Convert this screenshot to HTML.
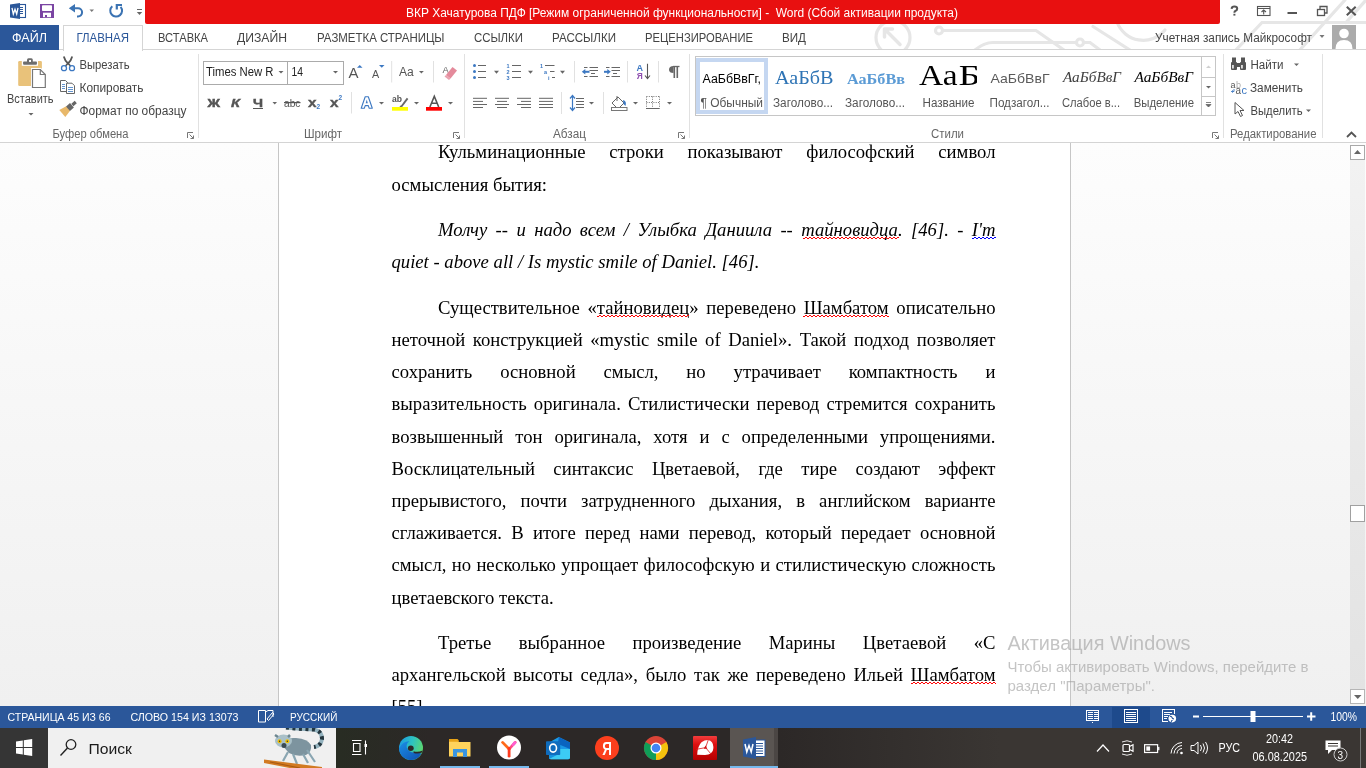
<!DOCTYPE html><html><head><meta charset="utf-8"><style>
*{margin:0;padding:0}
html,body{width:1366px;height:768px;overflow:hidden;background:#fff}
body{position:relative;font-family:'Liberation Sans',sans-serif}
.gl{will-change:transform}
.ln{position:absolute;white-space:nowrap;font-family:'Liberation Serif',serif;font-size:18.67px;line-height:32px;height:32px;color:#000}
.ln.j{text-align:justify;text-align-last:justify;white-space:normal}
.ln.it{font-style:italic}
u{text-decoration:none}

</style></head><body><div style="position:absolute;left:0;top:49px;width:1366px;height:1px;background:#d5d5d5"></div><div style="position:absolute;left:0;top:25px;width:59px;height:25px;background:#2b579a"></div><div style="position:absolute;left:63px;top:25px;width:78px;height:25px;background:#fff;border:1px solid #d5d5d5;border-bottom:none"></div><div style="position:absolute;left:0;top:142px;width:1366px;height:1px;background:#d4d4d4"></div><div style="position:absolute;left:203px;top:61px;width:84px;height:22px;border:1px solid #ababab;background:#fff"></div><div style="position:absolute;left:287px;top:61px;width:55px;height:22px;border:1px solid #ababab;background:#fff"></div><div style="position:absolute;left:695px;top:56px;width:519px;height:58px;border:1px solid #c6c6c6;background:#fff"></div><div style="position:absolute;left:696px;top:58px;width:64px;height:48px;border:4px solid #c5d7f1"></div><div style="position:absolute;left:0;top:143px;width:1366px;height:563px;background:linear-gradient(#fdfdfd,#f0f0f0)"></div><div style="position:absolute;left:278px;top:143px;width:791px;height:563px;background:#fff;border-left:1px solid #c6c6c6;border-right:1px solid #c6c6c6"></div><div style="position:absolute;left:1350px;top:160px;width:15px;height:529px;background:linear-gradient(#f2f2f2,#e8e8e8 60%,#e3e3e3)"></div><div style="position:absolute;left:1350px;top:145px;width:13px;height:13px;border:1px solid #a9a9a9;background:#fff"></div><div style="position:absolute;left:1350px;top:689px;width:13px;height:13px;border:1px solid #b5b5b5;background:#fff"></div><div style="position:absolute;left:1350px;top:505px;width:13px;height:15px;border:1px solid #a0a0a0;background:#fff"></div><div class="gl" style="position:absolute;left:279px;top:143px;width:790px;height:563px;overflow:hidden"><div class="ln j" style="top:-7.00px;left:159.00px;width:557.50px;">Кульминационные строки показывают философский символ</div><div class="ln" style="top:26.00px;left:112.50px;width:604.00px;">осмысления бытия:</div><div class="ln j it" style="top:71.00px;left:159.00px;width:557.50px;">Молчу -- и надо всем / Улыбка Даниила -- <u class="r">тайновидца</u>. [46]. - <u class="b">I'm</u></div><div class="ln it" style="top:103.00px;left:112.50px;width:604.00px;">quiet - above all / Is mystic smile of Daniel. [46].</div><div class="ln j" style="top:149.00px;left:159.00px;width:557.50px;">Существительное «<u class="r">тайновидец</u>» переведено <u class="r">Шамбатом</u> описательно</div><div class="ln j" style="top:181.00px;left:112.50px;width:604.00px;">неточной конструкцией «mystic smile of Daniel». Такой подход позволяет</div><div class="ln j" style="top:213.00px;left:112.50px;width:604.00px;">сохранить основной смысл, но утрачивает компактность и</div><div class="ln j" style="top:245.00px;left:112.50px;width:604.00px;">выразительность оригинала. Стилистически перевод стремится сохранить</div><div class="ln j" style="top:278.00px;left:112.50px;width:604.00px;">возвышенный тон оригинала, хотя и с определенными упрощениями.</div><div class="ln j" style="top:310.00px;left:112.50px;width:604.00px;">Восклицательный синтаксис Цветаевой, где тире создают эффект</div><div class="ln j" style="top:342.00px;left:112.50px;width:604.00px;">прерывистого, почти затрудненного дыхания, в английском варианте</div><div class="ln j" style="top:374.00px;left:112.50px;width:604.00px;">сглаживается. В итоге перед нами перевод, который передает основной</div><div class="ln j" style="top:406.00px;left:112.50px;width:604.00px;">смысл, но несколько упрощает философскую и стилистическую сложность</div><div class="ln" style="top:439.00px;left:112.50px;width:604.00px;">цветаевского текста.</div><div class="ln j" style="top:484.00px;left:159.00px;width:557.50px;">Третье выбранное произведение Марины Цветаевой «С</div><div class="ln j" style="top:516.00px;left:112.50px;width:604.00px;">архангельской высоты седла», было так же переведено Ильей <u class="r">Шамбатом</u></div><div class="ln" style="top:548.00px;left:112.50px;width:604.00px;">[55].</div></div><div style="position:absolute;left:0;top:706px;width:1366px;height:22px;background:#2b579a"></div><div style="position:absolute;left:1112px;top:707px;width:38px;height:21px;background:#1e4a8c"></div><div style="position:absolute;left:0;top:728px;width:1366px;height:40px;background:linear-gradient(90deg,#2b2b27 0px,#282c23 340px,#2c2827 430px,#2c2827 780px,#3a3633 1000px,#3a3633 1366px)"></div><div style="position:absolute;left:0;top:728px;width:48px;height:40px;background:#353535"></div><div style="position:absolute;left:48px;top:728px;width:288px;height:40px;background:#f0f0f0"></div><div style="position:absolute;left:730px;top:728px;width:44px;height:40px;background:#5a5552"></div><div style="position:absolute;left:774px;top:728px;width:4px;height:40px;background:#4b4644"></div><div style="position:absolute;left:440px;top:766px;width:40px;height:2px;background:#76b9ed"></div><div style="position:absolute;left:489px;top:766px;width:40px;height:2px;background:#76b9ed"></div><div style="position:absolute;left:730px;top:766px;width:48px;height:2px;background:#76b9ed"></div><svg class="gl" style="position:absolute;left:0;top:0" width="1366" height="768" viewBox="0 0 1366 768"><defs><clipPath id="clt"><rect x="0" y="0" width="1366" height="49"/></clipPath></defs><g clip-path="url(#clt)" stroke="#e6e6e6" stroke-width="3.2" fill="none" stroke-linecap="round"><circle cx="893" cy="37.6" r="17"/><path d="M885 29.5 L900 44.5 M884.5 29 V37 M884.5 29 H892.5" stroke-width="3.5"/><circle cx="939" cy="30.5" r="3.5"/><path d="M942.5 30.5 H1036 L1064 50"/><path d="M975 50 Q984 42.5 993 42.5 H1076.5"/><circle cx="1080" cy="42.5" r="3.5"/><path d="M1083.5 42.5 H1090 L1100 50"/><path d="M1093 26.5 L1130 50"/><path d="M1117 22 A28 28 0 0 0 1165 30"/><path d="M1234 52 L1262 22.5 H1366"/><path d="M1298 52 L1345 0"/><path d="M1346 22.5 L1366 0"/></g><path d="M145 0 H1220 V22 Q1220 24 1218 24 H147 Q145 24 145 22 Z" fill="#e81010"/><text x="406" y="17" font-family="'Liberation Sans', sans-serif" font-size="12" fill="#fff" font-weight="normal" text-anchor="start" textLength="552" lengthAdjust="spacingAndGlyphs" style="white-space:pre;">ВКР Хачатурова ПДФ [Режим ограниченной функциональности] -  Word (Сбой активации продукта)</text><g><rect x="19.5" y="4.5" width="6" height="13" fill="#fff" stroke="#2b579a" stroke-width="1.1"/><path d="M19 7.5h4M19 9.5h4M19 11.5h4M19 13.5h4" stroke="#2b579a" stroke-width="1"/><path d="M10 4.5 L20 3 L20 19 L10 17.5 Z" fill="#2b579a"/><path d="M12 7.8 L13.3 14 L15 9.2 L16.7 14 L18 7.8" stroke="#fff" stroke-width="1.3" fill="none"/><rect x="40" y="4" width="14" height="14" fill="#7b45a3"/><rect x="42" y="5.2" width="10" height="5.8" rx="0.8" fill="#fff"/><rect x="43" y="12.7" width="8" height="4.5" fill="#fff"/><rect x="45" y="15" width="2" height="2.2" fill="#7b45a3"/><path d="M68.8 8.2 L75 4 L75 12.4 Z" fill="#3b73b3"/><path d="M74 8.2 H78 A4.1 4.1 0 0 1 78 16.4 H77" stroke="#3b73b3" stroke-width="2" fill="none"/><path d="M89.5 9.5h4.5l-2.25 2.5z" fill="#777"/><path d="M112.3 6.2 A5.9 5.9 0 1 0 120.6 6.8" stroke="#3b73b3" stroke-width="2" fill="none"/><path d="M116.8 9.5 V5 H122" stroke="#3b73b3" stroke-width="2.2" fill="none"/><path d="M137 9.5h5" stroke="#666" stroke-width="1"/><path d="M136.8 12h5.4l-2.7 3z" fill="#666"/></g><g stroke="#555" fill="none"><path d="M1287.5 13h9.5" stroke-width="2"/><rect x="1317.5" y="9.5" width="7" height="6" stroke-width="1.3"/><path d="M1320 9.5 V6.5 H1327 V13 H1324.5" stroke-width="1.3"/><path d="M1346.8 6.8 L1355.7 15.2 M1355.7 6.8 L1346.8 15.2" stroke-width="2.1"/><rect x="1257.5" y="6.5" width="12.5" height="9" stroke-width="1.1"/><path d="M1257.5 8.5h12.5" stroke-width="1"/><path d="M1263.7 14.5v-4.5 M1261.5 12 L1263.7 10 L1266 12" stroke-width="1.1"/></g><path d="M1231.6 8.8 Q1231.8 6.6 1234.4 6.6 Q1237.2 6.6 1237.2 8.8 Q1237.2 10.3 1235.3 11 Q1234.4 11.4 1234.4 12.8" stroke="#555" stroke-width="2" fill="none"/><rect x="1233.4" y="13.8" width="2" height="1.8" fill="#555"/><text x="1155" y="42" font-family="'Liberation Sans', sans-serif" font-size="12" fill="#444" font-weight="normal" text-anchor="start" textLength="157" lengthAdjust="spacingAndGlyphs" style="white-space:pre;">Учетная запись Майкрософт</text><path d="M1319.5 35h5l-2.5 3z" fill="#777"/><rect x="1332" y="25" width="24" height="24" fill="#ababab"/><circle cx="1344" cy="33.5" r="4.8" fill="#fff"/><path d="M1335.5 49 Q1335.5 40 1344 40 Q1352.5 40 1352.5 49 Z" fill="#fff"/><text x="12" y="42" font-family="'Liberation Sans', sans-serif" font-size="12" fill="#fff" font-weight="normal" text-anchor="start" textLength="35" lengthAdjust="spacingAndGlyphs" style="white-space:pre;">ФАЙЛ</text><text x="76.5" y="42" font-family="'Liberation Sans', sans-serif" font-size="12" fill="#2b579a" font-weight="normal" text-anchor="start" textLength="52.5" lengthAdjust="spacingAndGlyphs" style="white-space:pre;">ГЛАВНАЯ</text><text x="158" y="42" font-family="'Liberation Sans', sans-serif" font-size="12" fill="#444" font-weight="normal" text-anchor="start" textLength="50" lengthAdjust="spacingAndGlyphs" style="white-space:pre;">ВСТАВКА</text><text x="237" y="42" font-family="'Liberation Sans', sans-serif" font-size="12" fill="#444" font-weight="normal" text-anchor="start" textLength="50" lengthAdjust="spacingAndGlyphs" style="white-space:pre;">ДИЗАЙН</text><text x="317" y="42" font-family="'Liberation Sans', sans-serif" font-size="12" fill="#444" font-weight="normal" text-anchor="start" textLength="127.5" lengthAdjust="spacingAndGlyphs" style="white-space:pre;">РАЗМЕТКА СТРАНИЦЫ</text><text x="474" y="42" font-family="'Liberation Sans', sans-serif" font-size="12" fill="#444" font-weight="normal" text-anchor="start" textLength="49" lengthAdjust="spacingAndGlyphs" style="white-space:pre;">ССЫЛКИ</text><text x="552" y="42" font-family="'Liberation Sans', sans-serif" font-size="12" fill="#444" font-weight="normal" text-anchor="start" textLength="64" lengthAdjust="spacingAndGlyphs" style="white-space:pre;">РАССЫЛКИ</text><text x="645" y="42" font-family="'Liberation Sans', sans-serif" font-size="12" fill="#444" font-weight="normal" text-anchor="start" textLength="108" lengthAdjust="spacingAndGlyphs" style="white-space:pre;">РЕЦЕНЗИРОВАНИЕ</text><text x="782" y="42" font-family="'Liberation Sans', sans-serif" font-size="12" fill="#444" font-weight="normal" text-anchor="start" textLength="24" lengthAdjust="spacingAndGlyphs" style="white-space:pre;">ВИД</text><path d="M198.5 54 V138" stroke="#e1e1e1" stroke-width="1"/><path d="M464.5 54 V138" stroke="#e1e1e1" stroke-width="1"/><path d="M689.5 54 V138" stroke="#e1e1e1" stroke-width="1"/><path d="M1223.5 54 V138" stroke="#e1e1e1" stroke-width="1"/><path d="M1322.5 54 V138" stroke="#e1e1e1" stroke-width="1"/><text x="52.5" y="137.5" font-family="'Liberation Sans', sans-serif" font-size="12" fill="#666" font-weight="normal" text-anchor="start" textLength="76" lengthAdjust="spacingAndGlyphs" style="white-space:pre;">Буфер обмена</text><text x="304" y="137.5" font-family="'Liberation Sans', sans-serif" font-size="12" fill="#666" font-weight="normal" text-anchor="start" textLength="38" lengthAdjust="spacingAndGlyphs" style="white-space:pre;">Шрифт</text><text x="553" y="137.5" font-family="'Liberation Sans', sans-serif" font-size="12" fill="#666" font-weight="normal" text-anchor="start" textLength="33" lengthAdjust="spacingAndGlyphs" style="white-space:pre;">Абзац</text><text x="931" y="137.5" font-family="'Liberation Sans', sans-serif" font-size="12" fill="#666" font-weight="normal" text-anchor="start" textLength="33" lengthAdjust="spacingAndGlyphs" style="white-space:pre;">Стили</text><text x="1230" y="137.5" font-family="'Liberation Sans', sans-serif" font-size="12" fill="#666" font-weight="normal" text-anchor="start" textLength="86.5" lengthAdjust="spacingAndGlyphs" style="white-space:pre;">Редактирование</text><g stroke="#777" stroke-width="1" fill="none"><path d="M187.5 138 V132.5 H193"/><path d="M189.5 134.5 L193.5 138.5 M193.5 135.5 V138.5 H190.5"/></g><g stroke="#777" stroke-width="1" fill="none"><path d="M453.5 138 V132.5 H459"/><path d="M455.5 134.5 L459.5 138.5 M459.5 135.5 V138.5 H456.5"/></g><g stroke="#777" stroke-width="1" fill="none"><path d="M678.5 138 V132.5 H684"/><path d="M680.5 134.5 L684.5 138.5 M684.5 135.5 V138.5 H681.5"/></g><g stroke="#777" stroke-width="1" fill="none"><path d="M1212.5 138 V132.5 H1218"/><path d="M1214.5 134.5 L1218.5 138.5 M1218.5 135.5 V138.5 H1215.5"/></g><path d="M1347 137 L1351.5 132.5 L1356 137" stroke="#555" stroke-width="1.8" fill="none"/><g><rect x="18.2" y="61" width="23.7" height="25" rx="1.2" fill="#e9c27a"/><rect x="21.8" y="60.5" width="16.2" height="5.3" fill="#fff"/><rect x="23.1" y="61.4" width="13.8" height="3.4" rx="0.8" fill="#6d6d6d"/><rect x="27" y="58.3" width="5.8" height="4.5" rx="1.5" fill="#6d6d6d"/><rect x="29.1" y="60" width="1.9" height="2" fill="#fff"/><path d="M31 68 H41 L46.8 73.8 V89 H31 Z" fill="#fff"/><path d="M32.5 69.5 H40.3 L45.3 74.5 V87.5 H32.5 Z" fill="#fff" stroke="#777" stroke-width="1.2"/><path d="M40.3 69.5 V74.5 H45.3" fill="none" stroke="#777" stroke-width="1.2"/><path d="M28.5 113 h5 l-2.5 2.5z" fill="#666"/><path d="M63.8 56.5 Q65 61 68 63.5 Q71 61 72.2 56.5" stroke="#555" stroke-width="1.8" fill="none"/><path d="M68 63.2 L65.5 66 M68 63.2 L70.5 66" stroke="#555" stroke-width="1.6"/><circle cx="64" cy="68.2" r="2.5" fill="none" stroke="#3c78c2" stroke-width="1.3"/><circle cx="72" cy="68.2" r="2.5" fill="none" stroke="#3c78c2" stroke-width="1.3"/><path d="M60.5 80.5 H65.5 L67.5 82.5 V91.5 H60.5 Z" fill="#fff" stroke="#666" stroke-width="1"/><path d="M62 84.5h3M62 86.5h3M62 88.5h3" stroke="#3c78c2" stroke-width="0.8"/><path d="M66.5 83.2 H72 L74.5 85.7 V93.5 H66.5 Z" fill="#fff" stroke="#666" stroke-width="1"/><path d="M68 87.5h5M68 89.5h5M68 91.5h5" stroke="#3c78c2" stroke-width="0.8"/><path d="M65.29 117.07 L70.10 110.85 L66.20 106.29 L59.31 110.08 Z" fill="#e8b86a"/><path d="M69.95 110.98 L73.90 107.60 L70.00 103.04 L66.05 106.42 Z" fill="#666"/><path d="M73.45 106.15 L76.79 103.29 L74.71 100.85 L71.37 103.71 Z" fill="#666"/></g><text x="7" y="102.7" font-family="'Liberation Sans', sans-serif" font-size="12" fill="#444" font-weight="normal" text-anchor="start" textLength="46.5" lengthAdjust="spacingAndGlyphs" style="white-space:pre;">Вставить</text><text x="79.5" y="69" font-family="'Liberation Sans', sans-serif" font-size="12" fill="#444" font-weight="normal" text-anchor="start" textLength="50" lengthAdjust="spacingAndGlyphs" style="white-space:pre;">Вырезать</text><text x="79.5" y="91.7" font-family="'Liberation Sans', sans-serif" font-size="12" fill="#444" font-weight="normal" text-anchor="start" textLength="64" lengthAdjust="spacingAndGlyphs" style="white-space:pre;">Копировать</text><text x="79.5" y="115" font-family="'Liberation Sans', sans-serif" font-size="12" fill="#444" font-weight="normal" text-anchor="start" textLength="107" lengthAdjust="spacingAndGlyphs" style="white-space:pre;">Формат по образцу</text><text x="206" y="76.4" font-family="'Liberation Sans', sans-serif" font-size="12" fill="#222" font-weight="normal" text-anchor="start" textLength="67.5" lengthAdjust="spacingAndGlyphs" style="white-space:pre;">Times New R</text><text x="291.5" y="76.4" font-family="'Liberation Sans', sans-serif" font-size="12" fill="#222" font-weight="normal" text-anchor="start" textLength="11.5" lengthAdjust="spacingAndGlyphs" style="white-space:pre;">14</text><path d="M278.5 71h5l-2.5 2.5z" fill="#666"/><path d="M333 71h5l-2.5 2.5z" fill="#666"/><g fill="#555"><text x="207.5" y="107.2" font-family="Liberation Sans" font-weight="bold" font-size="11.3" stroke="#555" stroke-width="0.5" textLength="12.5" lengthAdjust="spacingAndGlyphs">Ж</text><text x="231" y="107.2" font-family="Liberation Sans" font-weight="bold" font-style="italic" font-size="11.3" stroke="#555" stroke-width="0.4" textLength="9" lengthAdjust="spacingAndGlyphs">К</text><text x="253" y="107.2" font-family="Liberation Sans" font-weight="bold" font-size="11.3" stroke="#555" stroke-width="0.5" textLength="10" lengthAdjust="spacingAndGlyphs">Ч</text><rect x="253" y="108" width="10" height="1"/><path d="M272.5 102h4.5l-2.25 2.5z" fill="#666"/><text x="284" y="107" font-family="Liberation Sans" font-size="11" textLength="16.5" lengthAdjust="spacingAndGlyphs">abc</text><rect x="284" y="102" width="16.5" height="1.2"/><text x="308" y="107.3" font-family="Liberation Sans" font-weight="bold" font-size="13" stroke="#555" stroke-width="0.4" textLength="8.5" lengthAdjust="spacingAndGlyphs">x</text><text x="316.5" y="108.8" font-family="Liberation Sans" font-weight="bold" font-size="6.5" fill="#3c78c2">2</text><text x="330" y="107.3" font-family="Liberation Sans" font-weight="bold" font-size="13" stroke="#555" stroke-width="0.4" textLength="8.5" lengthAdjust="spacingAndGlyphs">x</text><text x="338.5" y="100" font-family="Liberation Sans" font-weight="bold" font-size="6.5" fill="#3c78c2">2</text></g><g><text x="348.5" y="77.8" font-family="Liberation Sans" font-size="14" fill="#555" textLength="10" lengthAdjust="spacingAndGlyphs">A</text><path d="M357 67.8h5.5l-2.75-2.8z" fill="#3c78c2"/><text x="372" y="77.8" font-family="Liberation Sans" font-size="10.5" fill="#555" textLength="7.2" lengthAdjust="spacingAndGlyphs">A</text><path d="M379 65h5.5l-2.75 2.8z" fill="#3c78c2"/><path d="M391.7 61 V82.5 M433.5 61 V82.5 M351.5 92 V113.5" stroke="#e1e1e1" stroke-width="1"/><text x="399" y="75.7" font-family="Liberation Sans" font-size="12" fill="#555" textLength="14.8" lengthAdjust="spacingAndGlyphs">Aa</text><path d="M419 71h4.8l-2.4 2.5z" fill="#666"/><text x="442.5" y="73" font-family="Liberation Sans" font-size="9.5" fill="#666">A</text><path d="M446 75 L452.5 67 L457 70.5 L450.5 78.5 Z" fill="#e48a9b"/><path d="M444.5 76.5 L446 75 L450.5 78.5 L449 80 Z" fill="#e48a9b" opacity="0.8"/><path d="M361.2 108.3 L365.2 96.8 H368.3 L372.3 108.3 H369.2 L368.3 105.6 H365.2 L364.3 108.3 Z" fill="#fff" stroke="#3c78c2" stroke-width="1.1" stroke-linejoin="round"/><path d="M365.7 103.3 H367.8 L366.75 99.6 Z" fill="#3c78c2"/><path d="M379 102h5l-2.5 2.5z" fill="#666"/><text x="392" y="101.5" font-family="Liberation Sans" font-size="9.5" font-weight="bold" fill="#555" textLength="10" lengthAdjust="spacingAndGlyphs">ab</text><path d="M400.5 106.2 L406.8 97.8 L408.3 99 L402 107.2 Z" fill="#666"/><path d="M399.5 107 L400.5 105.5 L401.8 106.6 Z" fill="#444"/><rect x="392" y="107" width="16" height="3.7" fill="#ffff00"/><path d="M414 102h5l-2.5 2.5z" fill="#666"/><path d="M429.9 107 L434.3 96.3 L438.7 107 M431.6 103.2 H437" stroke="#555" stroke-width="1.6" fill="none"/><rect x="426" y="107" width="16" height="3.7" fill="#ff0000"/><path d="M448 102h5l-2.5 2.5z" fill="#666"/></g><g><circle cx="474.5" cy="65.5" r="1.5" fill="#3c78c2"/><path d="M478 65.5h8" stroke="#666" stroke-width="1"/><path d="M512 65.5h9" stroke="#666" stroke-width="1"/><circle cx="474.5" cy="71.5" r="1.5" fill="#3c78c2"/><path d="M478 71.5h8" stroke="#666" stroke-width="1"/><path d="M512 71.5h9" stroke="#666" stroke-width="1"/><circle cx="474.5" cy="77.5" r="1.5" fill="#3c78c2"/><path d="M478 77.5h8" stroke="#666" stroke-width="1"/><path d="M512 77.5h9" stroke="#666" stroke-width="1"/><text x="506.5" y="68" font-family="Liberation Sans" font-size="5.5" font-weight="bold" fill="#3c78c2">1</text><text x="506.5" y="74" font-family="Liberation Sans" font-size="5.5" font-weight="bold" fill="#3c78c2">2</text><text x="506.5" y="80" font-family="Liberation Sans" font-size="5.5" font-weight="bold" fill="#3c78c2">3</text><path d="M494 70.8h5l-2.5 3z M528 70.8h5l-2.5 3z M560 70.8h5l-2.5 3z" fill="#666"/><text x="540" y="68" font-family="Liberation Sans" font-size="5.5" font-weight="bold" fill="#3c78c2">1</text><path d="M545 65.5h9.5 M550 71.5h4.5 M552 77.5h3" stroke="#666" stroke-width="1"/><text x="544" y="74" font-family="Liberation Sans" font-size="5.5" font-weight="bold" fill="#3c78c2">a</text><text x="548" y="80" font-family="Liberation Sans" font-size="5.5" font-weight="bold" fill="#3c78c2">i</text><path d="M574.5 61 V82.5 M627.5 61 V82.5 M658.5 61 V82.5 M561.5 92 V114 M603.5 92 V114" stroke="#e1e1e1" stroke-width="1"/><path d="M473 98.3h14" stroke="#666" stroke-width="1"/><path d="M473 101.4h10" stroke="#666" stroke-width="1"/><path d="M473 104.5h14" stroke="#666" stroke-width="1"/><path d="M473 107.5h10" stroke="#666" stroke-width="1"/><path d="M495.0 98.3h14" stroke="#666" stroke-width="1"/><path d="M497.0 101.4h10" stroke="#666" stroke-width="1"/><path d="M495.0 104.5h14" stroke="#666" stroke-width="1"/><path d="M497.0 107.5h10" stroke="#666" stroke-width="1"/><path d="M517 98.3h14" stroke="#666" stroke-width="1"/><path d="M521 101.4h10" stroke="#666" stroke-width="1"/><path d="M517 104.5h14" stroke="#666" stroke-width="1"/><path d="M521 107.5h10" stroke="#666" stroke-width="1"/><path d="M539 98.3h14" stroke="#666" stroke-width="1"/><path d="M539 101.4h14" stroke="#666" stroke-width="1"/><path d="M539 104.5h14" stroke="#666" stroke-width="1"/><path d="M539 107.5h14" stroke="#666" stroke-width="1"/><path d="M572.5 96 V110 M570 98.5 L572.5 95.5 L575 98.5 M570 107.5 L572.5 110.5 L575 107.5" stroke="#3c78c2" stroke-width="1.2" fill="none"/><path d="M576 98.5h8 M576 101.5h8 M576 104.5h8 M576 107.5h8" stroke="#666" stroke-width="1"/><path d="M589 102h5l-2.5 2.5z" fill="#666"/><path d="M584 67.5h3.5 M589.5 67.5h8.5 M589.5 70.5h8.5 M591 73.5h4 M584 76.5h3.5 M589.5 76.5h8.5" stroke="#666" stroke-width="1"/><path d="M581.8 71.8 L585.3 69 V74.6 Z" fill="#3c78c2"/><path d="M584.5 71.8 H589.5" stroke="#3c78c2" stroke-width="2"/><path d="M606 67.5h3.5 M611.5 67.5h8.5 M611.5 70.5h8.5 M613 73.5h4 M606 76.5h3.5 M611.5 76.5h8.5" stroke="#666" stroke-width="1"/><path d="M610.8 71.8 L607.3 69 V74.6 Z" fill="#3c78c2"/><path d="M604 71.8 H608" stroke="#3c78c2" stroke-width="2"/><text x="636.5" y="70.6" font-family="Liberation Sans" font-size="9" font-weight="bold" fill="#3c78c2" textLength="6.5" lengthAdjust="spacingAndGlyphs">A</text><text x="636.7" y="78.8" font-family="Liberation Sans" font-size="9" font-weight="bold" fill="#8e4fb0" textLength="6" lengthAdjust="spacingAndGlyphs">Я</text><path d="M647.5 63.8 V78.5 M645 75.5 L647.5 78.6 L650 75.5" stroke="#555" stroke-width="1.1" fill="none"/><path d="M673 66.5 H679.5" stroke="#666" stroke-width="1.3"/><path d="M674.3 66 V78 M677.3 66 V78" stroke="#666" stroke-width="1.6"/><path d="M673.5 66 Q669 66 669 69.5 Q669 73 673.5 73 Z" fill="#666"/><path d="M612 103 L618 97 L624 103 L618 109 Z" fill="none" stroke="#666" stroke-width="1"/><path d="M617 96 V101" stroke="#666" stroke-width="1"/><path d="M623 100 Q627 101 625.5 106 L623.5 104 Z" fill="#3c78c2"/><rect x="611.5" y="107.5" width="15.5" height="3" fill="#fff" stroke="#777" stroke-width="1"/><path d="M633 102h5l-2.5 2.5z" fill="#666"/><g stroke="#777" stroke-width="1" stroke-dasharray="1 1.3" fill="none"><path d="M646.5 96.5h13 M646.5 102.5h13 M646.5 96.5v12 M652.5 96.5v12 M659.5 96.5v12"/></g><path d="M646 108.5h13.5" stroke="#666" stroke-width="1"/><path d="M667 102h5l-2.5 2.5z" fill="#666"/></g><path d="M1201.5 57 V115 M1201.5 77.5 H1215 M1201.5 96.5 H1215" stroke="#c6c6c6" stroke-width="1" fill="none"/><path d="M1206 68h5l-2.5-2.5z" fill="#cfcfcf"/><path d="M1206 86h5l-2.5 2.5z" fill="#666"/><path d="M1206 102.5h5 M1206 104.5h5l-2.5 2.5z" stroke="#666" stroke-width="0.8" fill="#666"/><text x="702.5" y="83" font-family="'Liberation Sans', sans-serif" font-size="12" fill="#000" font-weight="normal" text-anchor="start" textLength="58.5" lengthAdjust="spacingAndGlyphs" style="white-space:pre;">АаБбВвГг,</text><text x="700.5" y="106.5" font-family="'Liberation Sans', sans-serif" font-size="12" fill="#555" font-weight="normal" text-anchor="start" textLength="62.5" lengthAdjust="spacingAndGlyphs" style="white-space:pre;">¶ Обычный</text><text x="775" y="84.2" font-family="'Liberation Serif', serif" font-size="18.5" fill="#2e74b5" font-weight="normal" text-anchor="start" textLength="58.5" lengthAdjust="spacingAndGlyphs" style="white-space:pre;">АаБбВ</text><text x="773" y="106.5" font-family="'Liberation Sans', sans-serif" font-size="12" fill="#555" font-weight="normal" text-anchor="start" textLength="60" lengthAdjust="spacingAndGlyphs" style="white-space:pre;">Заголово...</text><text x="847" y="83.7" font-family="'Liberation Serif', serif" font-size="14.5" fill="#5b9bd5" font-weight="bold" text-anchor="start" textLength="58" lengthAdjust="spacingAndGlyphs" style="white-space:pre;">АаБбВв</text><text x="845" y="106.5" font-family="'Liberation Sans', sans-serif" font-size="12" fill="#555" font-weight="normal" text-anchor="start" textLength="60" lengthAdjust="spacingAndGlyphs" style="white-space:pre;">Заголово...</text><defs><clipPath id="cl1"><rect x="915" y="57" width="62" height="40"/></clipPath></defs><g clip-path="url(#cl1)"><text x="919" y="85" font-family="'Liberation Serif', serif" font-size="30" fill="#000" font-weight="normal" text-anchor="start" textLength="38.5" lengthAdjust="spacingAndGlyphs" style="white-space:pre;">Аа</text><text x="958.5" y="85" font-family="'Liberation Serif', serif" font-size="30" fill="#000" font-weight="normal" text-anchor="start" textLength="22" lengthAdjust="spacingAndGlyphs" style="white-space:pre;">Б</text></g><text x="922.5" y="106.5" font-family="'Liberation Sans', sans-serif" font-size="12" fill="#555" font-weight="normal" text-anchor="start" textLength="52" lengthAdjust="spacingAndGlyphs" style="white-space:pre;">Название</text><text x="990.5" y="83" font-family="'Liberation Sans', sans-serif" font-size="13" fill="#5a5a5a" font-weight="normal" text-anchor="start" textLength="59" lengthAdjust="spacingAndGlyphs" style="white-space:pre;">АаБбВвГ</text><text x="989.5" y="106.5" font-family="'Liberation Sans', sans-serif" font-size="12" fill="#555" font-weight="normal" text-anchor="start" textLength="60" lengthAdjust="spacingAndGlyphs" style="white-space:pre;">Подзагол...</text><text x="1063" y="81.6" font-family="'Liberation Serif', serif" font-size="14" fill="#404040" font-weight="normal" text-anchor="start" textLength="58" lengthAdjust="spacingAndGlyphs" style="white-space:pre;font-style:italic">АаБбВвГ</text><text x="1062" y="106.5" font-family="'Liberation Sans', sans-serif" font-size="12" fill="#555" font-weight="normal" text-anchor="start" textLength="58" lengthAdjust="spacingAndGlyphs" style="white-space:pre;">Слабое в...</text><text x="1134.5" y="81.6" font-family="'Liberation Serif', serif" font-size="14" fill="#000" font-weight="normal" text-anchor="start" textLength="58.5" lengthAdjust="spacingAndGlyphs" style="white-space:pre;font-style:italic">АаБбВвГ</text><text x="1133.7" y="106.5" font-family="'Liberation Sans', sans-serif" font-size="12" fill="#555" font-weight="normal" text-anchor="start" textLength="60.3" lengthAdjust="spacingAndGlyphs" style="white-space:pre;">Выделение</text><g fill="#555"><rect x="1231" y="62" width="6" height="8" rx="1"/><rect x="1240" y="62" width="6" height="8" rx="1"/><rect x="1236" y="63" width="5" height="4"/><rect x="1232" y="57.5" width="4" height="5"/><rect x="1241" y="57.5" width="4" height="5"/><rect x="1232.2" y="65" width="1.5" height="3.5" fill="#fff"/><rect x="1241.2" y="65" width="1.5" height="3.5" fill="#fff"/></g><text x="1250.5" y="68.6" font-family="'Liberation Sans', sans-serif" font-size="12" fill="#444" font-weight="normal" text-anchor="start" textLength="33" lengthAdjust="spacingAndGlyphs" style="white-space:pre;">Найти</text><path d="M1294 63.5h5l-2.5 2.5z" fill="#666"/><text x="1230.5" y="87.5" font-family="Liberation Sans" font-size="9" fill="#555">a</text><text x="1236" y="87.5" font-family="Liberation Sans" font-size="9" fill="#aaa">b</text><text x="1235.5" y="94" font-family="Liberation Sans" font-size="10" fill="#555" textLength="5.5" lengthAdjust="spacingAndGlyphs">a</text><text x="1241.5" y="94" font-family="Liberation Sans" font-size="10" fill="#3c78c2" textLength="5.5" lengthAdjust="spacingAndGlyphs">c</text><path d="M1234 89 V91.5 H1231.5 M1232.8 90.3 L1231.5 91.5 L1232.8 92.7" stroke="#3c78c2" stroke-width="0.9" fill="none"/><text x="1250" y="92" font-family="'Liberation Sans', sans-serif" font-size="12" fill="#444" font-weight="normal" text-anchor="start" textLength="53" lengthAdjust="spacingAndGlyphs" style="white-space:pre;">Заменить</text><path d="M1235 102.5 V114 L1238 111.5 L1240.5 116.5 L1242.5 115.5 L1240 110.5 L1244 110.5 Z" fill="#fff" stroke="#555" stroke-width="1"/><text x="1250.5" y="115" font-family="'Liberation Sans', sans-serif" font-size="12" fill="#444" font-weight="normal" text-anchor="start" textLength="52" lengthAdjust="spacingAndGlyphs" style="white-space:pre;">Выделить</text><path d="M1306 109.5h5l-2.5 2.5z" fill="#666"/><path d="M1354 153.9h7l-3.5-3.9z" fill="#666"/><path d="M1354 695h7.5l-3.75 4z" fill="#666"/><text x="7.5" y="721.4" font-family="'Liberation Sans', sans-serif" font-size="11" fill="#fff" font-weight="normal" text-anchor="start" textLength="103" lengthAdjust="spacingAndGlyphs" style="white-space:pre;">СТРАНИЦА 45 ИЗ 66</text><text x="130.5" y="721.4" font-family="'Liberation Sans', sans-serif" font-size="11" fill="#fff" font-weight="normal" text-anchor="start" textLength="108" lengthAdjust="spacingAndGlyphs" style="white-space:pre;">СЛОВО 154 ИЗ 13073</text><text x="290" y="721.4" font-family="'Liberation Sans', sans-serif" font-size="11" fill="#fff" font-weight="normal" text-anchor="start" textLength="47.5" lengthAdjust="spacingAndGlyphs" style="white-space:pre;">РУССКИЙ</text><g stroke="#fff" stroke-width="1" fill="none"><path d="M258.5 710.5 H265.5 V722 H258.5 Z M265.5 712 L268 710.5 H273 V717"/><path d="M267 719 L272.5 712.5 L274 714 L268.5 720.5 Z"/></g><g stroke="#fff" stroke-width="1" fill="none" shape-rendering="crispEdges"><rect x="1086.5" y="710.5" width="12" height="10"/><path d="M1088 712.5h3.5 M1088 714.5h3.5 M1088 716.5h3.5 M1088 718.5h3.5 M1094 712.5h3.5 M1094 714.5h3.5 M1094 716.5h3.5 M1094 718.5h3.5"/><path d="M1092.5 710 V723" stroke-dasharray="1 1"/><rect x="1124.5" y="709.5" width="13" height="13" stroke-width="1.2"/><path d="M1126 712.5h10 M1126 714.5h10 M1126 716.5h10 M1126 718.5h10 M1126 720.5h10"/><path d="M1168 721.5 H1162.5 V709.5 H1174.5 V714"/><path d="M1164 712.5h8 M1164 714.5h6 M1164 716.5h4 M1164 718.5h3"/></g><circle cx="1172.3" cy="718.6" r="4.6" fill="#2b579a"/><circle cx="1172.3" cy="718.6" r="3.8" fill="#fff"/><path d="M1170 716.5 Q1171.5 716 1172 717.5 Q1172.5 719 1174 718.8 M1171.5 721.8 Q1171.2 720.3 1172.6 720.5" stroke="#2b579a" stroke-width="1.1" fill="none"/><path d="M1193 716.5h6 M1307 716.5h8.5 M1311.2 712.3v8.5" stroke="#fff" stroke-width="2"/><path d="M1203 716.5h100" stroke="#fff" stroke-width="1"/><rect x="1250.5" y="711" width="5" height="11" fill="#fff"/><text x="1330.5" y="721.4" font-family="'Liberation Sans', sans-serif" font-size="12" fill="#fff" font-weight="normal" text-anchor="start" textLength="26.5" lengthAdjust="spacingAndGlyphs" style="white-space:pre;">100%</text><g fill="#fff"><path d="M16 741.5 L22.8 740.5 V747 H16 Z M23.8 740.3 L32.2 739 V747 H23.8 Z M16 748 H22.8 V754.5 L16 753.5 Z M23.8 748 H32.2 V756 L23.8 754.7 Z"/></g><circle cx="71" cy="744.5" r="4.8" fill="none" stroke="#222" stroke-width="1.3"/><path d="M67.5 748 L60.5 755.5" stroke="#222" stroke-width="1.4"/><text x="88.5" y="753.5" font-family="'Liberation Sans', sans-serif" font-size="15" fill="#1a1a1a" font-weight="normal" text-anchor="start" textLength="43.5" lengthAdjust="spacingAndGlyphs" style="white-space:pre;">Поиск</text><defs><clipPath id="clsb"><rect x="48" y="728" width="288" height="40"/></clipPath></defs><g clip-path="url(#clsb)"><path d="M286 727.5 Q300 729 314 729.5 Q322 731 322 739 Q321 746 314 747" stroke="#93b2be" stroke-width="4" fill="none"/><path d="M286 727.5 Q300 729 314 729.5 Q322 731 322 739 Q321 746 314 747" stroke="#24363e" stroke-width="4" stroke-dasharray="3 3.5" fill="none"/><path d="M281 744 Q284 737 296 738 Q308 739 311 745 Q312 752 306 755 Q296 757 289 753 Z" fill="#7d949f"/><path d="M288 752 L283 761 M293 754 L297 764 M303 754 L308 763 M307 750 L315 762" stroke="#8aa6b2" stroke-width="2.2" fill="none"/><ellipse cx="283.5" cy="741" rx="8.5" ry="6.5" fill="#a9c0c8"/><path d="M275 735 L278 737 M290 735 L288 737" stroke="#6d8791" stroke-width="2.5"/><circle cx="284" cy="745.5" r="2.5" fill="#3b4b52"/><circle cx="279.6" cy="741.2" r="2" fill="#f0c000"/><circle cx="287.3" cy="741.2" r="2" fill="#f0c000"/><circle cx="279.6" cy="741.2" r="0.7" fill="#333"/><circle cx="287.3" cy="741.2" r="0.7" fill="#333"/><path d="M264 759.5 L322 767 L322 770 L300 770 L264 763 Z" fill="#d27a22"/><path d="M270 762 L300 768" stroke="#a85a12" stroke-width="1.2"/></g><g stroke="#fff" stroke-width="1.1" fill="none"><path d="M352 740.5 H361.5 M352 754.5 H361.5 M353.5 743.5 V751.5 H360 V743.5 Z M365.5 740.5 V754.5"/></g><rect x="364.5" y="744" width="2.5" height="3" fill="#fff"/><defs><linearGradient id="edg" x1="0" y1="0.3" x2="1" y2="0.6"><stop offset="0" stop-color="#1b9de2"/><stop offset="0.5" stop-color="#2ec3c0"/><stop offset="1" stop-color="#5fd86a"/></linearGradient><linearGradient id="edg2" x1="0" y1="0" x2="1" y2="1"><stop offset="0" stop-color="#1b8fe6"/><stop offset="1" stop-color="#0f4fae"/></linearGradient></defs><circle cx="411" cy="748" r="12" fill="url(#edg)"/><path d="M399 748.5 A12 12 0 0 0 421.6 753.6 Q418 752.6 414.5 752.6 Q408.5 752.3 406.8 747.8 Q405.8 743.5 409.5 741.3 Q402.5 741.2 399 748.5 Z" fill="url(#edg2)"/><ellipse cx="410.8" cy="748.2" rx="2.9" ry="2.7" fill="#2c2827"/><path d="M413.6 751.3 Q418 752.6 422.6 750.6 L422 752.6 Q417.5 754.3 413.6 752.9 Z" fill="#2c2827"/><path d="M449 740.5 H457 L458.8 742 H470.5 V756.5 H449 Z" fill="#ffd35c"/><path d="M449 739 H457.5 L459 740.6 V741.8 H449 Z" fill="#e8a317"/><path d="M453 749 H467 V757 H463 V752.5 H457 V757 H453 Z" fill="#3a95e0"/><circle cx="509" cy="747.5" r="12" fill="#fff"/><path d="M502.6 742.4 L509.1 749.1" stroke="#ff6a1a" stroke-width="2.8" stroke-linecap="round"/><path d="M515.2 742.4 L509.1 749.1" stroke="#ff4a8a" stroke-width="2.8" stroke-linecap="round"/><path d="M514.8 742.8 L513.2 744.6" stroke="#ff5fd0" stroke-width="2.8" stroke-linecap="round"/><path d="M509.1 748.5 V756.2" stroke="#ff3b1e" stroke-width="2.8" stroke-linecap="round"/><path d="M549 742.5 L558.8 737 L570 742.5 V757.5 Q570 759.2 568.3 759.2 H550.7 Q549 759.2 549 757.5 Z" fill="#1a9ae8"/><path d="M558.8 737 L570 742.5 V749 L558 744 Z" fill="#0a64c0"/><path d="M549 749 L570 749 V757.5 Q570 759.2 568.3 759.2 H550.7 Q549 759.2 549 757.5 Z" fill="#3ccbf4"/><path d="M549 749.5 L559 754 L549 759 Z" fill="#1490df"/><rect x="546" y="741.2" width="14.2" height="13.8" rx="0.8" fill="#0f6cbd"/><ellipse cx="553.1" cy="748.1" rx="3.4" ry="4" fill="none" stroke="#fff" stroke-width="1.6"/><circle cx="607" cy="748" r="12" fill="#fc3f1d"/><text x="602.2" y="755.2" font-family="Liberation Sans" font-weight="bold" font-size="19" fill="#fff" textLength="9.6" lengthAdjust="spacingAndGlyphs">Я</text><circle cx="656" cy="748" r="12" fill="#db4437"/><path d="M656 748 L645.6 742 A12 12 0 0 0 656 760 Z" fill="#0f9d58"/><path d="M656 748 L656 760 A12 12 0 0 0 666.4 742 Z" fill="#f4c20d"/><circle cx="656" cy="748" r="5.5" fill="#fff"/><circle cx="656" cy="748" r="4.3" fill="#4285f4"/><defs><linearGradient id="adb" x1="0" y1="0" x2="0" y2="1"><stop offset="0" stop-color="#f23d3d"/><stop offset="0.35" stop-color="#dd1010"/><stop offset="1" stop-color="#b50000"/></linearGradient></defs><rect x="693" y="736" width="24" height="24" rx="1" fill="url(#adb)"/><path d="M697.2 754.8 Q697.6 746 701.5 742.3 Q704.5 739.8 708 739.9 Q713.2 740.8 713.4 747 Q713.5 751.5 710.5 753.5 Q709 754.8 705 754.9 Z" fill="#fff"/><path d="M705.6 747.6 L708.4 739.5 M705.6 747.6 L711 754 M705.6 747.6 L696.5 749.3" stroke="#e03030" stroke-width="0.9"/><path d="M703.8 748.8 L705.6 745.6 L707.3 748.8 Z" fill="#d01010"/><rect x="754" y="740" width="11" height="16.5" fill="#fff" stroke="#2b579a" stroke-width="1"/><path d="M756 743.5h7M756 746h7M756 748.5h7M756 751h7M756 753.5h7" stroke="#2b579a" stroke-width="1"/><path d="M743 739.5 L756 737 V759 L743 756.5 Z" fill="#2b579a"/><path d="M745 744 L746.8 752 L749 745.5 L751.2 752 L753 744" stroke="#fff" stroke-width="1.5" fill="none"/><g stroke="#fff" fill="none" stroke-width="1.2"><path d="M1097 751.5 L1103 745 L1109 751.5"/><rect x="1123" y="744.5" width="6.5" height="7" rx="1"/><path d="M1129.5 746.5 L1133 744.8 V751.2 L1129.5 749.5"/><path d="M1122 742 Q1127 739.5 1132 742 M1122 754 Q1127 756.5 1132 754" stroke-width="0.9"/><rect x="1144.6" y="744.7" width="13" height="7.8"/><rect x="1158.1" y="746.9" width="1.3" height="3.3" fill="#fff" stroke="none"/><path d="M1171 753.5 A11.5 11.5 0 0 1 1182 742.5 M1174 753.5 A8.5 8.5 0 0 1 1182 745.5 M1177 753.5 A5.5 5.5 0 0 1 1182 748.5" stroke-width="1"/><path d="M1191 745.5 H1194 L1198 742 V754 L1194 750.5 H1191 Z" stroke-width="1"/><path d="M1200.5 745 Q1202.5 748 1200.5 751 M1203 743.5 Q1206 748 1203 752.5 M1205.5 742 Q1209.5 748 1205.5 754" stroke-width="1"/></g><rect x="1146.3" y="746.4" width="3.8" height="4.3" fill="#fff"/><circle cx="1181.5" cy="753" r="1.3" fill="#fff"/><text x="1218.5" y="752.2" font-family="'Liberation Sans', sans-serif" font-size="12" fill="#fff" font-weight="normal" text-anchor="start" textLength="21.5" lengthAdjust="spacingAndGlyphs" style="white-space:pre;">РУС</text><text x="1266" y="742.8" font-family="'Liberation Sans', sans-serif" font-size="12" fill="#fff" font-weight="normal" text-anchor="start" textLength="27" lengthAdjust="spacingAndGlyphs" style="white-space:pre;">20:42</text><text x="1252.5" y="760.6" font-family="'Liberation Sans', sans-serif" font-size="12" fill="#fff" font-weight="normal" text-anchor="start" textLength="54.5" lengthAdjust="spacingAndGlyphs" style="white-space:pre;">06.08.2025</text><path d="M1325.5 740.5 H1340.5 V750 H1332 L1328 754 V750 H1325.5 Z" fill="#fff"/><path d="M1328 743.5h10 M1328 746h10" stroke="#3a3633" stroke-width="1"/><circle cx="1340.5" cy="754.5" r="6.5" fill="#3a3633" stroke="#ccc" stroke-width="1"/><text x="1337.5" y="758.5" font-family="'Liberation Sans', sans-serif" font-size="10" fill="#fff" font-weight="normal" text-anchor="start" style="white-space:pre;">3</text><path d="M1360.5 728 V768" stroke="#777" stroke-width="1"/><g fill="#ff0000" shape-rendering="crispEdges"><rect x="803" y="238" width="2" height="1"/><rect x="805" y="237" width="2" height="1"/><rect x="807" y="238" width="2" height="1"/><rect x="809" y="237" width="2" height="1"/><rect x="811" y="238" width="2" height="1"/><rect x="813" y="237" width="2" height="1"/><rect x="815" y="238" width="2" height="1"/><rect x="817" y="237" width="2" height="1"/><rect x="819" y="238" width="2" height="1"/><rect x="821" y="237" width="2" height="1"/><rect x="823" y="238" width="2" height="1"/><rect x="825" y="237" width="2" height="1"/><rect x="827" y="238" width="2" height="1"/><rect x="829" y="237" width="2" height="1"/><rect x="831" y="238" width="2" height="1"/><rect x="833" y="237" width="2" height="1"/><rect x="835" y="238" width="2" height="1"/><rect x="837" y="237" width="2" height="1"/><rect x="839" y="238" width="2" height="1"/><rect x="841" y="237" width="2" height="1"/><rect x="843" y="238" width="2" height="1"/><rect x="845" y="237" width="2" height="1"/><rect x="847" y="238" width="2" height="1"/><rect x="849" y="237" width="2" height="1"/><rect x="851" y="238" width="2" height="1"/><rect x="853" y="237" width="2" height="1"/><rect x="855" y="238" width="2" height="1"/><rect x="857" y="237" width="2" height="1"/><rect x="859" y="238" width="2" height="1"/><rect x="861" y="237" width="2" height="1"/><rect x="863" y="238" width="2" height="1"/><rect x="865" y="237" width="2" height="1"/><rect x="867" y="238" width="2" height="1"/><rect x="869" y="237" width="2" height="1"/><rect x="871" y="238" width="2" height="1"/><rect x="873" y="237" width="2" height="1"/><rect x="875" y="238" width="2" height="1"/><rect x="877" y="237" width="2" height="1"/><rect x="879" y="238" width="2" height="1"/><rect x="881" y="237" width="2" height="1"/><rect x="883" y="238" width="2" height="1"/><rect x="885" y="237" width="2" height="1"/><rect x="887" y="238" width="2" height="1"/><rect x="889" y="237" width="2" height="1"/><rect x="891" y="238" width="2" height="1"/><rect x="893" y="237" width="2" height="1"/><rect x="895" y="238" width="2" height="1"/><rect x="897" y="237" width="2" height="1"/></g><g fill="#0000ff" shape-rendering="crispEdges"><rect x="972" y="238" width="2" height="1"/><rect x="974" y="237" width="2" height="1"/><rect x="976" y="238" width="2" height="1"/><rect x="978" y="237" width="2" height="1"/><rect x="980" y="238" width="2" height="1"/><rect x="982" y="237" width="2" height="1"/><rect x="984" y="238" width="2" height="1"/><rect x="986" y="237" width="2" height="1"/><rect x="988" y="238" width="2" height="1"/><rect x="990" y="237" width="2" height="1"/><rect x="992" y="238" width="2" height="1"/><rect x="994" y="237" width="2" height="1"/></g><g fill="#ff0000" shape-rendering="crispEdges"><rect x="597" y="316" width="2" height="1"/><rect x="599" y="315" width="2" height="1"/><rect x="601" y="316" width="2" height="1"/><rect x="603" y="315" width="2" height="1"/><rect x="605" y="316" width="2" height="1"/><rect x="607" y="315" width="2" height="1"/><rect x="609" y="316" width="2" height="1"/><rect x="611" y="315" width="2" height="1"/><rect x="613" y="316" width="2" height="1"/><rect x="615" y="315" width="2" height="1"/><rect x="617" y="316" width="2" height="1"/><rect x="619" y="315" width="2" height="1"/><rect x="621" y="316" width="2" height="1"/><rect x="623" y="315" width="2" height="1"/><rect x="625" y="316" width="2" height="1"/><rect x="627" y="315" width="2" height="1"/><rect x="629" y="316" width="2" height="1"/><rect x="631" y="315" width="2" height="1"/><rect x="633" y="316" width="2" height="1"/><rect x="635" y="315" width="2" height="1"/><rect x="637" y="316" width="2" height="1"/><rect x="639" y="315" width="2" height="1"/><rect x="641" y="316" width="2" height="1"/><rect x="643" y="315" width="2" height="1"/><rect x="645" y="316" width="2" height="1"/><rect x="647" y="315" width="2" height="1"/><rect x="649" y="316" width="2" height="1"/><rect x="651" y="315" width="2" height="1"/><rect x="653" y="316" width="2" height="1"/><rect x="655" y="315" width="2" height="1"/><rect x="657" y="316" width="2" height="1"/><rect x="659" y="315" width="2" height="1"/><rect x="661" y="316" width="2" height="1"/><rect x="663" y="315" width="2" height="1"/><rect x="665" y="316" width="2" height="1"/><rect x="667" y="315" width="2" height="1"/><rect x="669" y="316" width="2" height="1"/><rect x="671" y="315" width="2" height="1"/><rect x="673" y="316" width="2" height="1"/><rect x="675" y="315" width="2" height="1"/><rect x="677" y="316" width="2" height="1"/><rect x="679" y="315" width="2" height="1"/><rect x="681" y="316" width="2" height="1"/><rect x="683" y="315" width="2" height="1"/><rect x="685" y="316" width="2" height="1"/><rect x="687" y="315" width="2" height="1"/></g><g fill="#ff0000" shape-rendering="crispEdges"><rect x="803" y="316" width="2" height="1"/><rect x="805" y="315" width="2" height="1"/><rect x="807" y="316" width="2" height="1"/><rect x="809" y="315" width="2" height="1"/><rect x="811" y="316" width="2" height="1"/><rect x="813" y="315" width="2" height="1"/><rect x="815" y="316" width="2" height="1"/><rect x="817" y="315" width="2" height="1"/><rect x="819" y="316" width="2" height="1"/><rect x="821" y="315" width="2" height="1"/><rect x="823" y="316" width="2" height="1"/><rect x="825" y="315" width="2" height="1"/><rect x="827" y="316" width="2" height="1"/><rect x="829" y="315" width="2" height="1"/><rect x="831" y="316" width="2" height="1"/><rect x="833" y="315" width="2" height="1"/><rect x="835" y="316" width="2" height="1"/><rect x="837" y="315" width="2" height="1"/><rect x="839" y="316" width="2" height="1"/><rect x="841" y="315" width="2" height="1"/><rect x="843" y="316" width="2" height="1"/><rect x="845" y="315" width="2" height="1"/><rect x="847" y="316" width="2" height="1"/><rect x="849" y="315" width="2" height="1"/><rect x="851" y="316" width="2" height="1"/><rect x="853" y="315" width="2" height="1"/><rect x="855" y="316" width="2" height="1"/><rect x="857" y="315" width="2" height="1"/><rect x="859" y="316" width="2" height="1"/><rect x="861" y="315" width="2" height="1"/><rect x="863" y="316" width="2" height="1"/><rect x="865" y="315" width="2" height="1"/><rect x="867" y="316" width="2" height="1"/><rect x="869" y="315" width="2" height="1"/><rect x="871" y="316" width="2" height="1"/><rect x="873" y="315" width="2" height="1"/><rect x="875" y="316" width="2" height="1"/><rect x="877" y="315" width="2" height="1"/><rect x="879" y="316" width="2" height="1"/><rect x="881" y="315" width="2" height="1"/><rect x="883" y="316" width="2" height="1"/><rect x="885" y="315" width="2" height="1"/><rect x="887" y="316" width="2" height="1"/></g><g fill="#ff0000" shape-rendering="crispEdges"><rect x="911" y="683" width="2" height="1"/><rect x="913" y="682" width="2" height="1"/><rect x="915" y="683" width="2" height="1"/><rect x="917" y="682" width="2" height="1"/><rect x="919" y="683" width="2" height="1"/><rect x="921" y="682" width="2" height="1"/><rect x="923" y="683" width="2" height="1"/><rect x="925" y="682" width="2" height="1"/><rect x="927" y="683" width="2" height="1"/><rect x="929" y="682" width="2" height="1"/><rect x="931" y="683" width="2" height="1"/><rect x="933" y="682" width="2" height="1"/><rect x="935" y="683" width="2" height="1"/><rect x="937" y="682" width="2" height="1"/><rect x="939" y="683" width="2" height="1"/><rect x="941" y="682" width="2" height="1"/><rect x="943" y="683" width="2" height="1"/><rect x="945" y="682" width="2" height="1"/><rect x="947" y="683" width="2" height="1"/><rect x="949" y="682" width="2" height="1"/><rect x="951" y="683" width="2" height="1"/><rect x="953" y="682" width="2" height="1"/><rect x="955" y="683" width="2" height="1"/><rect x="957" y="682" width="2" height="1"/><rect x="959" y="683" width="2" height="1"/><rect x="961" y="682" width="2" height="1"/><rect x="963" y="683" width="2" height="1"/><rect x="965" y="682" width="2" height="1"/><rect x="967" y="683" width="2" height="1"/><rect x="969" y="682" width="2" height="1"/><rect x="971" y="683" width="2" height="1"/><rect x="973" y="682" width="2" height="1"/><rect x="975" y="683" width="2" height="1"/><rect x="977" y="682" width="2" height="1"/><rect x="979" y="683" width="2" height="1"/><rect x="981" y="682" width="2" height="1"/><rect x="983" y="683" width="2" height="1"/><rect x="985" y="682" width="2" height="1"/><rect x="987" y="683" width="2" height="1"/><rect x="989" y="682" width="2" height="1"/><rect x="991" y="683" width="2" height="1"/><rect x="993" y="682" width="2" height="1"/><rect x="995" y="683" width="1" height="1"/></g><text x="1007.5" y="649.9" font-family="'Liberation Sans', sans-serif" font-size="20" fill="rgba(160,160,160,0.62)" font-weight="normal" text-anchor="start" textLength="183" lengthAdjust="spacingAndGlyphs" style="white-space:pre;">Активация Windows</text><text x="1007.5" y="671.5" font-family="'Liberation Sans', sans-serif" font-size="14.67" fill="rgba(160,160,160,0.62)" font-weight="normal" text-anchor="start" textLength="301" lengthAdjust="spacingAndGlyphs" style="white-space:pre;">Чтобы активировать Windows, перейдите в</text><text x="1007.5" y="691" font-family="'Liberation Sans', sans-serif" font-size="14.67" fill="rgba(160,160,160,0.62)" font-weight="normal" text-anchor="start" textLength="147.5" lengthAdjust="spacingAndGlyphs" style="white-space:pre;">раздел &quot;Параметры&quot;.</text></svg></body></html>
